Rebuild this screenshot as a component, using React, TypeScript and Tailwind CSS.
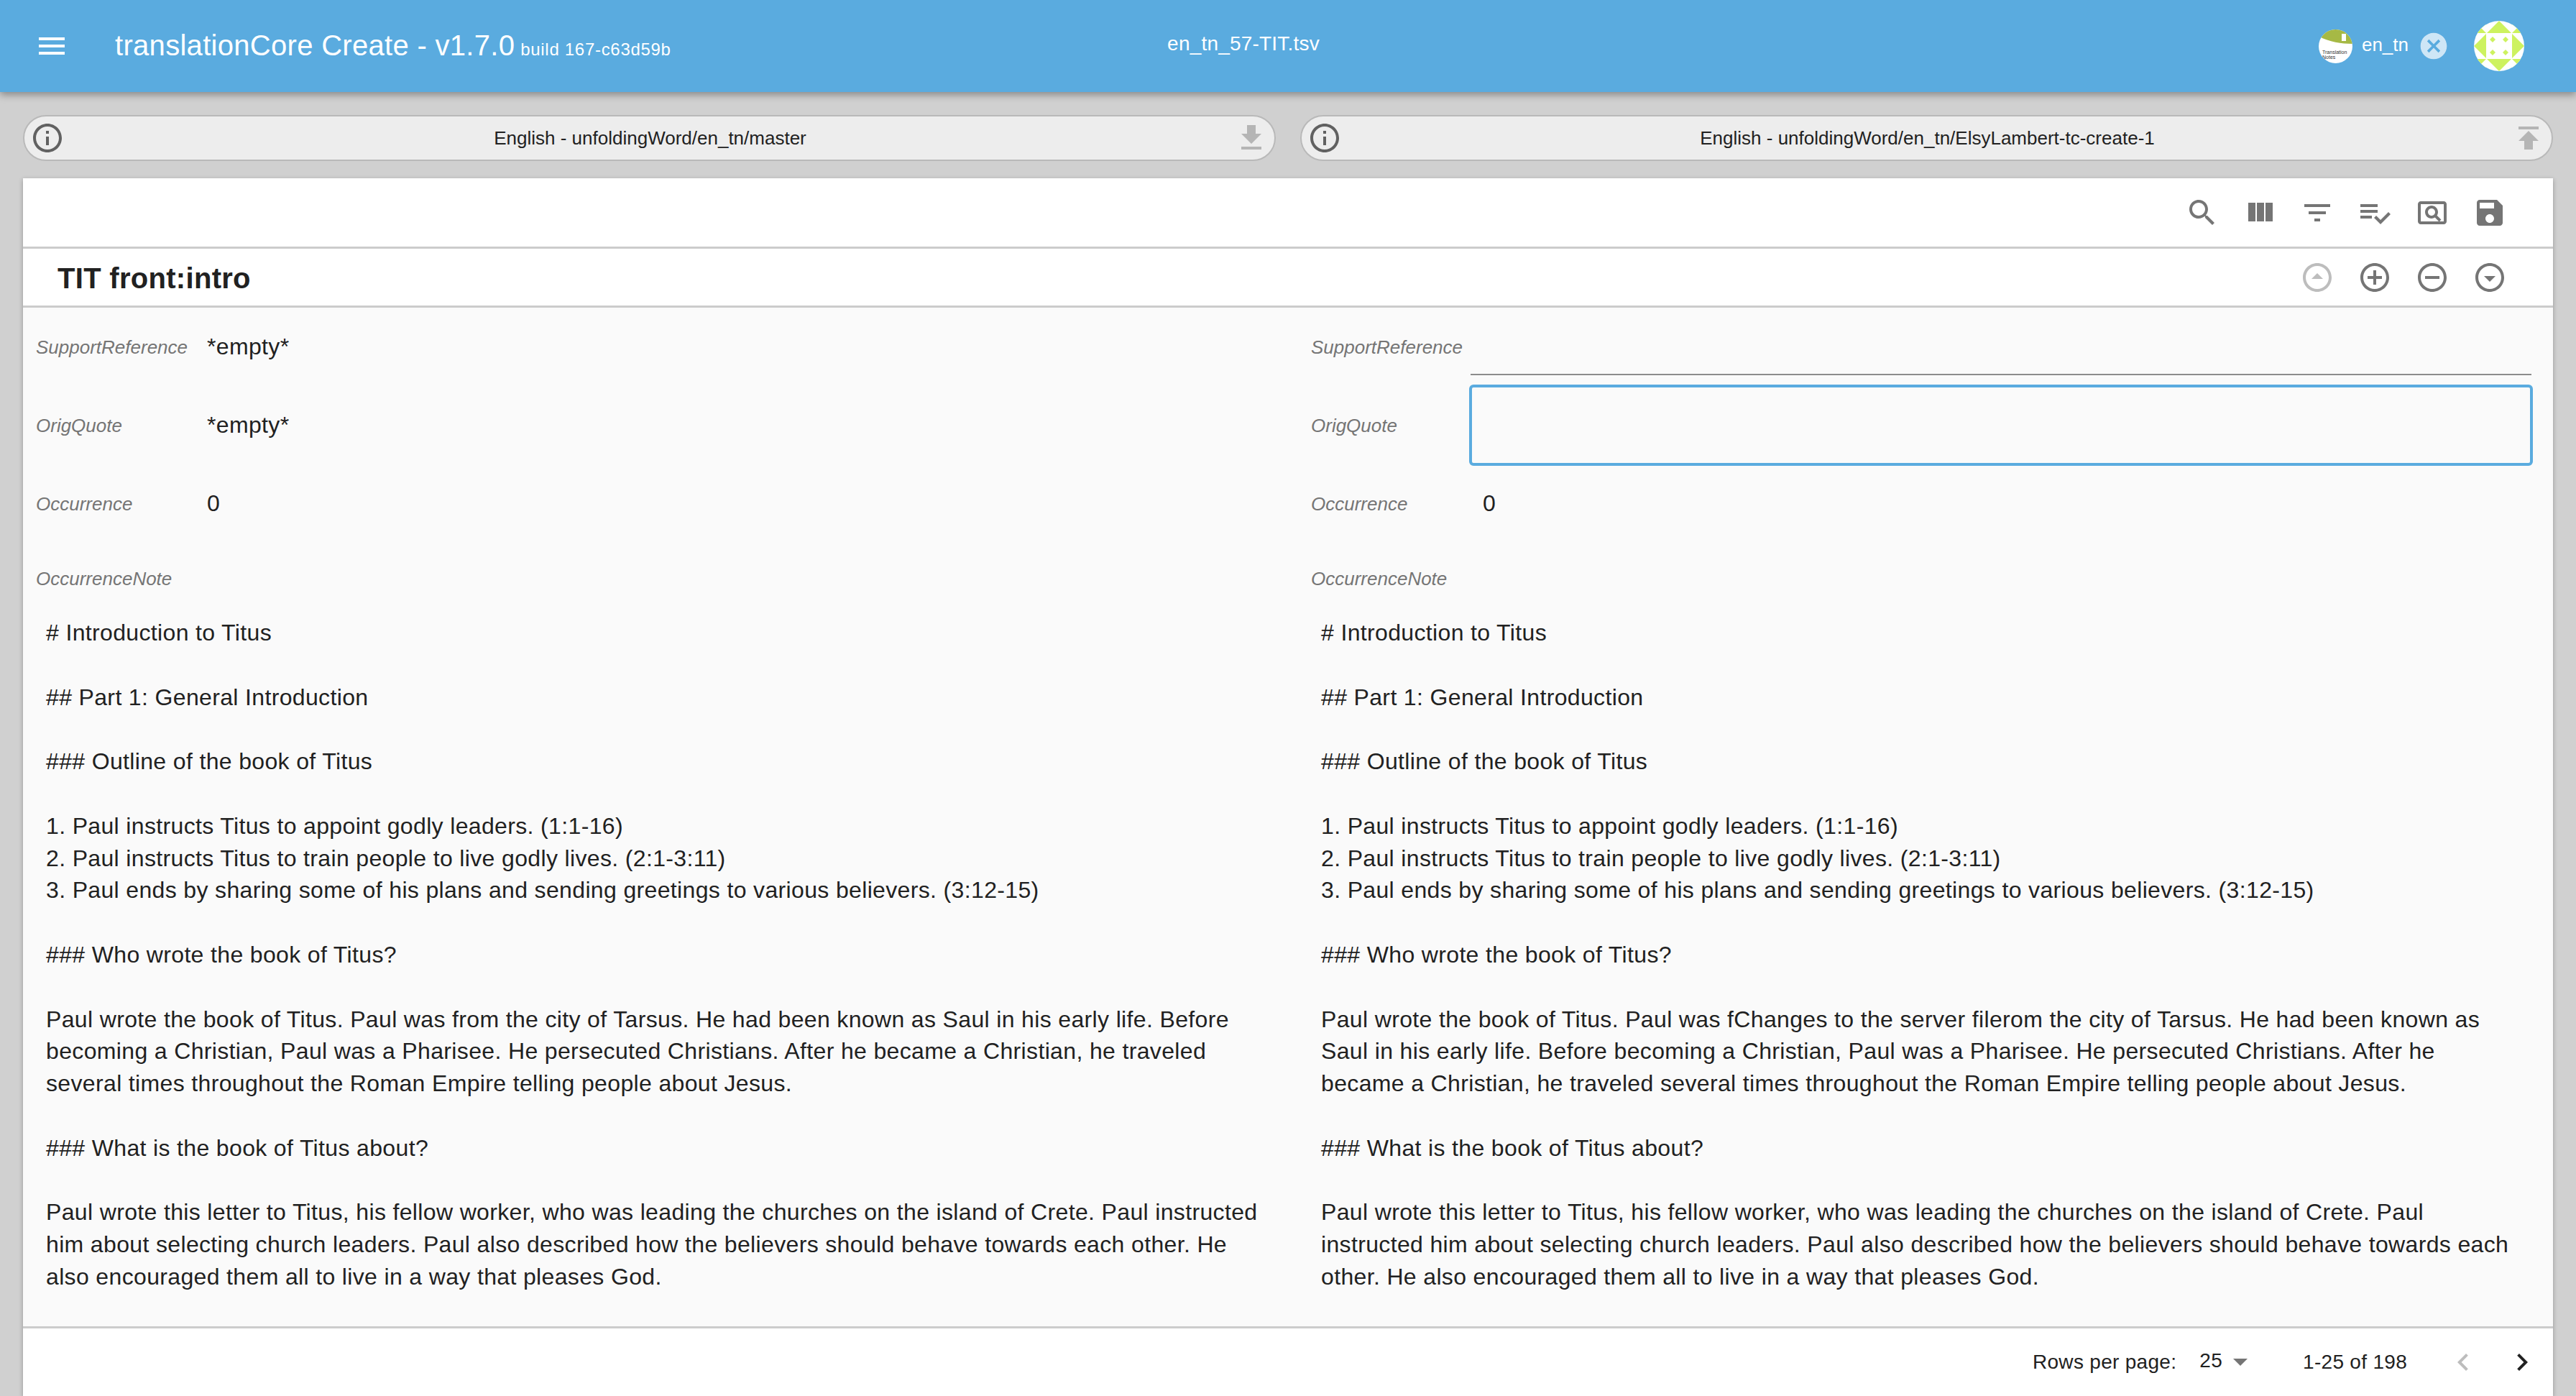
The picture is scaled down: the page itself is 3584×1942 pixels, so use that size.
import React from "react";

const P = {
  menu: "M3 18h18v-2H3v2zm0-5h18v-2H3v2zm0-7v2h18V6H3z",
  info: "M11 7h2v2h-2zm0 4h2v6h-2zm1-9C6.48 2 2 6.48 2 12s4.48 10 10 10 10-4.48 10-10S17.52 2 12 2zm0 18c-4.41 0-8-3.59-8-8s3.59-8 8-8 8 3.59 8 8-3.59 8-8 8z",
  search: "M15.5 14h-.79l-.28-.27C15.41 12.59 16 11.11 16 9.5 16 5.91 13.09 3 9.5 3S3 5.91 3 9.5 5.91 16 9.5 16c1.61 0 3.09-.59 4.23-1.57l.27.28v.79l5 4.99L20.49 19l-4.99-5zm-6 0C7.01 14 5 11.99 5 9.5S7.01 5 9.5 5 14 7.01 14 9.5 11.99 14 9.5 14z",
  columns: "M10 18h5V5h-5v13zm-6 0h5V5H4v13zM16 5v13h5V5h-5z",
  filter: "M10 18h4v-2h-4v2zM3 6v2h18V6H3zm3 7h12v-2H6v2z",
  check: "M14 10H2v2h12v-2zm0-4H2v2h12V6zM2 16h8v-2H2v2zm19.5-4.5L23 13l-6.99 7-4.51-4.5L13 14l3.01 3 5.49-5.5z",
  preview: "M20 4H4c-1.1 0-2 .9-2 2v12c0 1.1.9 2 2 2h16c1.1 0 2-.9 2-2V6c0-1.1-.9-2-2-2zm0 14H4V6h16v12zM11.5 7C9 7 7 9 7 11.5S9 16 11.5 16c.87 0 1.69-.26 2.38-.7l2.91 2.91 1.42-1.42-2.91-2.9c.44-.7.7-1.51.7-2.39C16 9 14 7 11.5 7zm0 7C10.12 14 9 12.88 9 11.5S10.12 9 11.5 9 14 10.12 14 11.5 12.88 14 11.5 14z",
  save: "M17 3H5c-1.11 0-2 .9-2 2v14c0 1.1.89 2 2 2h14c1.1 0 2-.9 2-2V7l-4-4zm-5 16c-1.66 0-3-1.34-3-3s1.34-3 3-3 3 1.34 3 3-1.34 3-3 3zm3-10H5V5h10v4z",
  up: "M12 20c-4.41 0-8-3.59-8-8s3.59-8 8-8 8 3.59 8 8-3.59 8-8 8m0 2c5.52 0 10-4.48 10-10S17.52 2 12 2 2 6.48 2 12s4.48 10 10 10zm0-13l-4 4h8z",
  plus: "M13 7h-2v4H7v2h4v4h2v-4h4v-2h-4V7zm-1-5C6.48 2 2 6.48 2 12s4.48 10 10 10 10-4.48 10-10S17.52 2 12 2zm0 18c-4.41 0-8-3.59-8-8s3.59-8 8-8 8 3.59 8 8-3.59 8-8 8z",
  minus: "M7 11v2h10v-2H7zm5-9C6.48 2 2 6.48 2 12s4.48 10 10 10 10-4.48 10-10S17.52 2 12 2zm0 18c-4.41 0-8-3.59-8-8s3.59-8 8-8 8 3.59 8 8-3.59 8-8 8z",
  down: "M12 4c4.41 0 8 3.59 8 8s-3.59 8-8 8-8-3.59-8-8 3.59-8 8-8m0-2C6.48 2 2 6.48 2 12s4.48 10 10 10 10-4.48 10-10S17.52 2 12 2zm0 13l-4-4h8z",
  download: "M19 9h-4V3H9v6H5l7 7 7-7zM5 18v2h14v-2H5z",
  upload: "M5 4v2h14V4H5zm0 10h4v6h6v-6h4l-7-7-7 7z",
  prev: "M15.41 7.41L14 6l-6 6 6 6 1.41-1.41L10.83 12z",
  next: "M10 6L8.59 7.41 13.17 12l-4.58 4.59L10 18l6-6z",
  cancel: "M12 2C6.47 2 2 6.47 2 12s4.47 10 10 10 10-4.47 10-10S17.53 2 12 2zm5 13.59L15.59 17 12 13.41 8.41 17 7 15.59 10.59 12 7 8.41 8.41 7 12 10.59 15.59 7 17 8.41 13.41 12 17 15.59z",
};

function Icon({ d, className }: { d: string; className: string }) {
  return (
    <svg viewBox="0 0 24 24" className={className} fill="currentColor">
      <path d={d} />
    </svg>
  );
}

function Identicon() {
  const lime = "#cdf25f";
  return (
    <svg viewBox="0 0 70 70" className="w-[70px] h-[70px] shrink-0 rounded-full bg-white">
      <g fill={lime}>
        <path d="M35 0L52 17H18z" />
        <path d="M35 70L52 53H18z" />
        <path d="M0 35L17 18V52z" />
        <path d="M70 35L53 18V52z" />
        <path d="M17 3V17H3z" />
        <path d="M53 3V17H67z" />
        <path d="M17 67V53H3z" />
        <path d="M53 67V53H67z" />
        <path d="M26 22l4 4-4 4-4-4z" />
        <path d="M44 22l4 4-4 4-4-4z" />
        <path d="M26 40l4 4-4 4-4-4z" />
        <path d="M44 40l4 4-4 4-4-4z" />
      </g>
      <g fill="#ffffff">
        <path d="M17 17L0 0H17z" />
        <path d="M53 17L70 0H53z" />
        <path d="M17 53L0 70H17z" />
        <path d="M53 53L70 70H53z" />
      </g>
    </svg>
  );
}

function NotesLogo() {
  return (
    <svg viewBox="0 0 47 47" className="w-[47px] h-[47px] shrink-0 rounded-full bg-white">
      <path d="M0 0H47V20C32 20 14 17 1 10z" fill="#a6b945" />
      <path d="M32 6h6v10h-6z" fill="#ffffff" />
      <text x="5" y="34" fontSize="7" fill="#333333" fontFamily="Liberation Sans">Translation</text>
      <text x="5" y="41" fontSize="7" fill="#333333" fontFamily="Liberation Sans">Notes</text>
    </svg>
  );
}

function SourceBar({ title, icon }: { title: string; icon: string }) {
  return (
    <div className="h-[64px] rounded-[32px] border-2 border-[#b9b9b9] bg-[#ededed] flex items-center pl-[8px] pr-[8px]">
      <Icon d={P.info} className="w-[48px] h-[48px] text-[#616161] shrink-0" />
      <div className="flex-1 pl-[2px] text-center text-[26px] text-[#212121]">{title}</div>
      <Icon d={icon} className="w-[48px] h-[48px] text-[#b5b5b5] shrink-0" />
    </div>
  );
}

function Field({ label, labelW, children }: { label: string; labelW: string; children: React.ReactNode }) {
  return (
    <div className="h-[109px] flex items-center">
      <div className={`${labelW} shrink-0 mt-[2px] text-[26px] italic text-[#757575]`}>{label}</div>
      <div className="flex-1 h-full flex">{children}</div>
    </div>
  );
}

const Plain = ({ v, inset }: { v: string; inset: string }) => (
  <div className={`${inset} text-[32px] leading-[44px] tracking-[0.35px] text-[#212121] self-center -mt-[2px]`}>{v}</div>
);

function Note({ lines }: { lines: string[] }) {
  return (
    <div className="text-[32px] leading-[44.8px] tracking-[0.35px] text-[#212121] whitespace-pre-wrap">{lines.join("\n")}</div>
  );
}

const head = [
  "# Introduction to Titus", "",
  "## Part 1: General Introduction", "",
  "### Outline of the book of Titus", "",
  "1. Paul instructs Titus to appoint godly leaders. (1:1-16)",
  "2. Paul instructs Titus to train people to live godly lives. (2:1-3:11)",
  "3. Paul ends by sharing some of his plans and sending greetings to various believers. (3:12-15)", "",
  "### Who wrote the book of Titus?", "",
];

const leftLines = [
  ...head,
  "Paul wrote the book of Titus. Paul was from the city of Tarsus. He had been known as Saul in his early life. Before becoming a Christian, Paul was a Pharisee. He persecuted Christians. After he became a Christian, he traveled several times throughout the Roman Empire telling people about Jesus.", "",
  "### What is the book of Titus about?", "",
  "Paul wrote this letter to Titus, his fellow worker, who was leading the churches on the island of Crete. Paul instructed him about selecting church leaders. Paul also described how the believers should behave towards each other. He also encouraged them all to live in a way that pleases God.",
];

const rightLines = [
  ...head,
  "Paul wrote the book of Titus. Paul was fChanges to the server filerom the city of Tarsus. He had been known as Saul in his early life. Before becoming a Christian, Paul was a Pharisee. He persecuted Christians. After he became a Christian, he traveled several times throughout the Roman Empire telling people about Jesus.", "",
  "### What is the book of Titus about?", "",
  "Paul wrote this letter to Titus, his fellow worker, who was leading the churches on the island of Crete. Paul instructed him about selecting church leaders. Paul also described how the believers should behave towards each other. He also encouraged them all to live in a way that pleases God.",
];

export default function App() {
  return (
    <div className="h-[1942px] overflow-hidden flex flex-col bg-[#d0d0d0] font-['Liberation_Sans',sans-serif]">
      <header className="relative z-10 h-[128px] shrink-0 bg-[#5aabdf] text-white flex items-center shadow-[0_4px_10px_rgba(0,0,0,0.35)]">
        <div className="w-[160px] shrink-0 pl-[48px]">
          <Icon d={P.menu} className="w-[48px] h-[48px]" />
        </div>
        <div className="w-[1410px] shrink-0 flex items-baseline -mt-[2px]">
          <span className="text-[40px] tracking-[0.3px]">translationCore Create - v1.7.0</span>
          <span className="text-[24px] tracking-[0.7px] ml-[8px]">build 167-c63d59b</span>
        </div>
        <div className="w-[320px] shrink-0 text-center text-[28px] tracking-[0.2px] -mt-[6px]">en_tn_57-TIT.tsv</div>
        <div className="flex-1 flex items-center justify-end pr-[72px] gap-[34px]">
          <div className="flex items-center">
            <NotesLogo />
            <span className="text-[26px] ml-[13px] -mt-[4px]">en_tn</span>
            <Icon d={P.cancel} className="w-[44px] h-[44px] ml-[13px] text-white/70" />
          </div>
          <Identicon />
        </div>
      </header>

      <div className="shrink-0 grid grid-cols-2 gap-[34px] pl-[32px] pr-[32px] pt-[32px] pb-[24px]">
        <SourceBar title="English - unfoldingWord/en_tn/master" icon={P.download} />
        <SourceBar title="English - unfoldingWord/en_tn/ElsyLambert-tc-create-1" icon={P.upload} />
      </div>

      <main className="flex-1 min-h-0 mx-[32px] flex flex-col bg-white shadow-[0_2px_6px_rgba(0,0,0,0.3)]">
        <div className="h-[98px] shrink-0 border-b-[3px] border-[#cccccc] flex items-center justify-end pr-[64px] gap-[32px] text-[#757575]">
          {[P.search, P.columns, P.filter, P.check, P.preview, P.save].map((d) => (
            <Icon key={d} d={d} className="w-[48px] h-[48px]" />
          ))}
        </div>
        <div className="h-[82px] shrink-0 border-b-[3px] border-[#cccccc] flex items-center pl-[48px] pr-[64px] text-[#757575]">
          <h1 className="flex-1 text-[40px] font-bold tracking-[0.3px] text-[#212121] mt-[2px]">TIT front:intro</h1>
          <div className="flex gap-[32px]">
            <Icon d={P.up} className="w-[48px] h-[48px] text-[#bdbdbd]" />
            <Icon d={P.plus} className="w-[48px] h-[48px]" />
            <Icon d={P.minus} className="w-[48px] h-[48px]" />
            <Icon d={P.down} className="w-[48px] h-[48px]" />
          </div>
        </div>

        <div className="flex-1 min-h-0 overflow-hidden bg-[#fafafa] grid grid-cols-[1776px_1fr]">
          <div className="pl-[18px] pr-[24px]">
            <Field label="SupportReference" labelW="w-[214px]"><Plain inset="pl-[24px]" v="*empty*" /></Field>
            <Field label="OrigQuote" labelW="w-[214px]"><Plain inset="pl-[24px]" v="*empty*" /></Field>
            <Field label="Occurrence" labelW="w-[214px]"><Plain inset="pl-[24px]" v="0" /></Field>
            <div className="h-[98px] pt-[2px] flex items-center text-[26px] italic text-[#757575]">OccurrenceNote</div>
            <div className="pl-[14px] pr-[29px] pt-[5px]"><Note lines={leftLines} /></div>
          </div>
          <div className="pl-[16px] pr-[30px]">
            <Field label="SupportReference" labelW="w-[222px]">
              <div className="w-full h-[94px] border-b-2 border-[#8c8c8c]" />
            </Field>
            <Field label="OrigQuote" labelW="w-[222px]">
              <div className="flex-1 h-[113px] self-end shrink-0 -mb-[2px] -mx-[2px] border-[4px] border-[#5aabdf] rounded-[6px]" />
            </Field>
            <Field label="Occurrence" labelW="w-[222px]"><Plain inset="pl-[17px]" v="0" /></Field>
            <div className="h-[98px] pt-[2px] flex items-center text-[26px] italic text-[#757575]">OccurrenceNote</div>
            <div className="pl-[14px] pr-[22px] pt-[5px]"><Note lines={rightLines} /></div>
          </div>
        </div>

        <div className="h-[97px] shrink-0 border-t-[3px] border-[#cccccc] flex items-center justify-end text-[28px] tracking-[0.3px] text-[#212121]">
          <span>Rows per page:</span>
          <span className="ml-[32px] -mt-[4px]">25</span>
          <svg viewBox="0 0 20 10" className="w-[20px] h-[10px] ml-[15px] text-[#757575]" fill="currentColor"><path d="M0 0h20L10 10z" /></svg>
          <span className="ml-[77px]">1-25 of 198</span>
          <Icon d={P.prev} className="w-[48px] h-[48px] ml-[54px] text-[#bdbdbd]" />
          <Icon d={P.next} className="w-[48px] h-[48px] ml-[34px] mr-[19px] text-[#212121]" />
        </div>
      </main>
    </div>
  );
}
